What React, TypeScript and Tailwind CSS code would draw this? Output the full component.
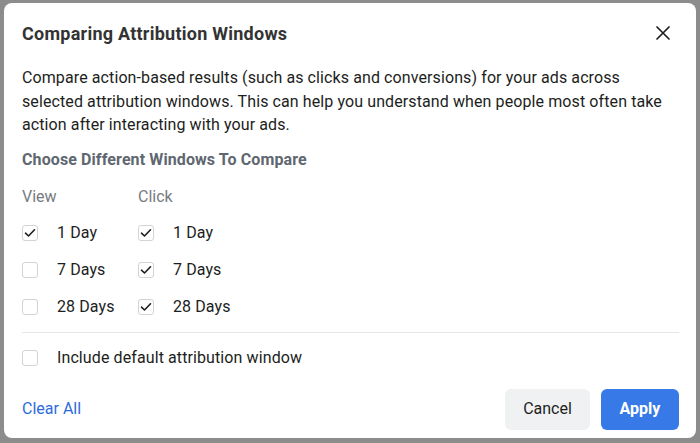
import React from "react";

function Box({ checked }: { checked: boolean }) {
  return (
    <div className="w-4 h-4 rounded-[3px] border border-[#d0d3d8] bg-white flex items-center justify-center shrink-0">
      {checked && (
        <svg width="12" height="10" viewBox="0 0 12 10" fill="none">
          <path d="M1.5 5.2 L4.5 8 L10.5 1.8" stroke="#1c1e21" strokeWidth="1.6" strokeLinecap="round" strokeLinejoin="round" />
        </svg>
      )}
    </div>
  );
}

function Opt({ checked, label }: { checked: boolean; label: string }) {
  return (
    <div className="flex items-center h-[37px]">
      <Box checked={checked} />
      <span className="ml-[19px] text-[16px] text-[#1c1e21] tracking-[0.1px]">{label}</span>
    </div>
  );
}

export default function App() {
  return (
    <div
      className="w-[700px] h-[443px] bg-[#8c8c8c] pt-[3px] pl-[4px] overflow-hidden"
      style={{ fontFamily: "Roboto, 'Liberation Sans', sans-serif" }}
    >
      <div className="w-[692px] h-[435px] bg-white rounded-[8px] pl-[18px] pr-[17px] flex flex-col">
        <div className="flex items-center justify-between h-[58px] pt-[2px]">
          <h1 className="text-[18px] font-bold text-[#333] tracking-[0.25px]">Comparing Attribution Windows</h1>
          <svg width="16" height="16" viewBox="0 0 16 16" className="mr-[8px]">
            <path d="M2 2 L14 14 M14 2 L2 14" stroke="#1c1e21" strokeWidth="1.7" strokeLinecap="round" />
          </svg>
        </div>
        <p className="text-[16px] leading-[23.5px] text-[#1c1e21] tracking-[0.1px] mt-[5px]">
          Compare action-based results (such as clicks and conversions) for your ads across selected attribution windows. This can help you understand when people most often take action after interacting with your ads.
        </p>
        <div className="mt-[11px] text-[16px] font-bold text-[#606770] tracking-[0.1px]">Choose Different Windows To Compare</div>
        <div className="flex mt-[15px]">
          <div className="w-[116px]">
            <div className="text-[16px] text-[#777b80] h-[20px] leading-[20px] mb-[8px]">View</div>
            <Opt checked label="1 Day" />
            <Opt checked={false} label="7 Days" />
            <Opt checked={false} label="28 Days" />
          </div>
          <div>
            <div className="text-[16px] text-[#777b80] h-[20px] leading-[20px] mb-[8px]">Click</div>
            <Opt checked label="1 Day" />
            <Opt checked label="7 Days" />
            <Opt checked label="28 Days" />
          </div>
        </div>
        <div className="h-px bg-[#e4e6ea] mt-[6px]" />
        <div className="mt-[7px]">
          <Opt checked={false} label="Include default attribution window" />
        </div>
        <div className="flex items-center justify-between mt-[12px]">
          <span className="text-[16px] text-[#2d6ce0]">Clear All</span>
          <div className="flex gap-[11px]">
            <button className="w-[85px] h-[41px] rounded-[6px] bg-[#f0f1f3] text-[16px] text-[#1c1e21]">Cancel</button>
            <button className="w-[78px] h-[41px] rounded-[6px] bg-[#3879e8] text-[16px] font-bold text-white">Apply</button>
          </div>
        </div>
      </div>
    </div>
  );
}
